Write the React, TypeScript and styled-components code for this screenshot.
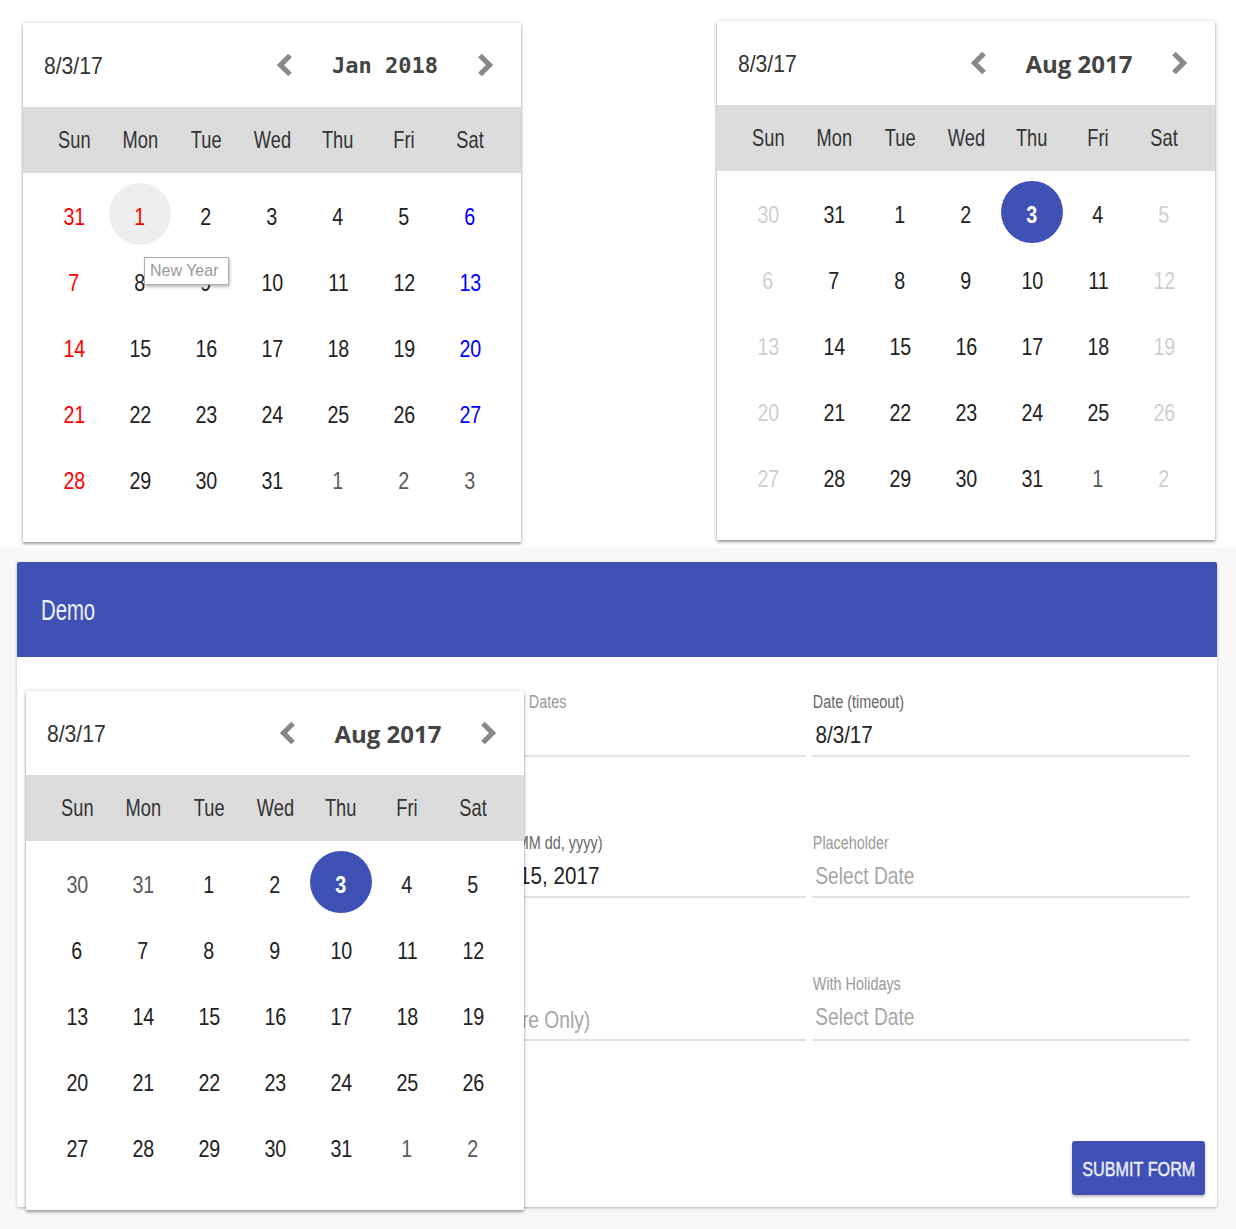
import React from 'react';
import styled, { createGlobalStyle } from 'styled-components';

const SANS = `"Liberation Sans", Arial, sans-serif`;

const GlobalStyle = createGlobalStyle`
  html, body { margin: 0; padding: 0; background: #ffffff; }
  body { font-family: ${SANS}; }
  * { box-sizing: border-box; }
`;

type Tone = 'normal' | 'muted' | 'faded' | 'sun' | 'sat' | 'selected' | 'holiday';

interface DayCell {
  day: number;
  tone: Tone;
}

const toneColor: Record<Tone, string> = {
  normal: '#222222',
  muted: '#5a5a5a',
  faded: '#cfcfcf',
  sun: '#ff0000',
  sat: '#0000ff',
  selected: '#ffffff',
  holiday: '#ff0000',
};

const Page = styled.div`
  width: 1236px;
  height: 1229px;
  display: flex;
  flex-direction: column;
  overflow: hidden;
`;

const TopRow = styled.section`
  height: 548px;
  background: #ffffff;
  display: flex;
  justify-content: space-between;
  align-items: flex-start;
  padding: 21px 21px 0 23px;
`;

const BottomArea = styled.section`
  flex: 1;
  background: #f8f8f8;
  padding: 14px 19px 0 17px;
`;

const CalendarCard = styled.div<{ $shiftTop?: number }>`
  position: relative;
  width: 498px;
  height: 519px;
  margin-top: ${(p) => p.$shiftTop ?? 0}px;
  background: #ffffff;
  box-shadow: 0 2px 3px rgba(0, 0, 0, 0.35), 0 0 4px rgba(0, 0, 0, 0.12);
  display: flex;
  flex-direction: column;
`;

const PopupLayer = styled.div`
  position: absolute;
  left: 9px;
  top: 129px;
  z-index: 5;
`;

const CalHeader = styled.div`
  height: 84px;
  display: flex;
  align-items: center;
  justify-content: space-between;
  padding: 0 21px;
`;

const SelectedDate = styled.span`
  display: inline-block;
  margin-top: 2px;
  font-family: ${SANS};
  font-size: 24px;
  color: #333333;
  transform: scaleX(0.88);
  transform-origin: left center;
  white-space: nowrap;
`;

const MonthNav = styled.div`
  display: flex;
  align-items: center;
`;

const NavButton = styled.button`
  width: 30px;
  height: 30px;
  border: 0;
  padding: 0;
  background: none;
  display: flex;
  align-items: center;
  justify-content: center;
  cursor: pointer;
`;

const MonthTitle = styled.span<{ $mono?: boolean }>`
  width: 170px;
  text-align: center;
  color: #444444;
  font-weight: 700;
  font-size: ${(p) => (p.$mono ? '22px' : '24px')};
  font-family: ${(p) => (p.$mono ? '"DejaVu Sans Mono", monospace' : '"Open Sans", sans-serif')};
`;

const WeekBar = styled.div`
  height: 66px;
  background: #dcdcdc;
  display: grid;
  grid-template-columns: repeat(7, 66px);
  padding: 0 18px;
  align-items: center;
  justify-items: center;
`;

const WeekdayName = styled.span`
  display: inline-block;
  font-family: ${SANS};
  font-size: 24px;
  color: #333333;
  transform: scaleX(0.76);
  white-space: nowrap;
`;

const DayGrid = styled.div`
  display: grid;
  grid-template-columns: repeat(7, 66px);
  grid-auto-rows: 66px;
  padding: 10px 18px 0;
`;

const DayCellBox = styled.div`
  display: flex;
  align-items: flex-start;
  justify-content: center;
`;

const DayMark = styled.span<{ $tone: Tone }>`
  width: 62px;
  height: 62px;
  border-radius: 50%;
  display: flex;
  align-items: center;
  justify-content: center;
  padding-top: 5px;
  background: ${(p) =>
    p.$tone === 'selected' ? '#3f51b5' : p.$tone === 'holiday' ? '#eeeeee' : 'transparent'};
`;

const DayNumber = styled.span<{ $tone: Tone }>`
  display: inline-block;
  font-family: ${SANS};
  font-size: 24px;
  color: ${(p) => toneColor[p.$tone]};
  font-weight: ${(p) => (p.$tone === 'selected' ? 700 : 400)};
  transform: scaleX(0.82);
`;

const Tooltip = styled.div`
  position: absolute;
  left: 121px;
  top: 234px;
  width: 85px;
  height: 28px;
  background: #ffffff;
  border: 1px solid #b0b0b0;
  box-shadow: 1px 2px 3px rgba(0, 0, 0, 0.25);
  font-family: ${SANS};
  font-size: 16px;
  color: #9a9a9a;
  padding: 4px 0 0 5px;
  white-space: nowrap;
`;

const Chevron = ({ dir }: { dir: 'left' | 'right' }) => (
  <svg width="18" height="24" viewBox="0 0 18 24" aria-hidden>
    <polyline
      points={dir === 'left' ? '14,2.5 4.5,12 14,21.5' : '4,2.5 13.5,12 4,21.5'}
      fill="none"
      stroke="#888888"
      strokeWidth="5.2"
      strokeLinejoin="miter"
    />
  </svg>
);

const WEEKDAYS = ['Sun', 'Mon', 'Tue', 'Wed', 'Thu', 'Fri', 'Sat'];

function buildMonth(
  startDay: number,
  prevMonthLen: number,
  monthLen: number,
  toneFor: (day: number, col: number, inMonth: boolean) => Tone,
): DayCell[] {
  const cells: DayCell[] = [];
  const lead = prevMonthLen - startDay + 1;
  for (let i = 0; i < 35; i++) {
    const col = i % 7;
    let day: number;
    let inMonth = true;
    const idx = i - lead;
    if (idx < 0) {
      day = startDay + i;
      inMonth = false;
    } else if (idx >= monthLen) {
      day = idx - monthLen + 1;
      inMonth = false;
    } else {
      day = idx + 1;
    }
    cells.push({ day, tone: toneFor(day, col, inMonth) });
  }
  return cells;
}

const janCells = buildMonth(31, 31, 31, (day, col, inMonth) => {
  if (inMonth && day === 1) return 'holiday';
  if (col === 0) return 'sun';
  if (!inMonth) return 'muted';
  if (col === 6) return 'sat';
  return 'normal';
});

const augWeekendCells = buildMonth(30, 31, 31, (day, col, inMonth) => {
  if (col === 0 || col === 6) return 'faded';
  if (inMonth && day === 3) return 'selected';
  if (!inMonth && day === 1) return 'muted';
  return 'normal';
});

const augCells = buildMonth(30, 31, 31, (day, _col, inMonth) => {
  if (inMonth && day === 3) return 'selected';
  if (!inMonth) return 'muted';
  return 'normal';
});

interface CalendarProps {
  title: string;
  mono?: boolean;
  cells: DayCell[];
  shiftTop?: number;
  tooltip?: string;
}

const Calendar = ({ title, mono, cells, shiftTop, tooltip }: CalendarProps) => (
  <CalendarCard $shiftTop={shiftTop}>
    <CalHeader>
      <SelectedDate>8/3/17</SelectedDate>
      <MonthNav>
        <NavButton aria-label="Previous month">
          <Chevron dir="left" />
        </NavButton>
        <MonthTitle $mono={mono}>{title}</MonthTitle>
        <NavButton aria-label="Next month">
          <Chevron dir="right" />
        </NavButton>
      </MonthNav>
    </CalHeader>
    <WeekBar>
      {WEEKDAYS.map((w) => (
        <WeekdayName key={w}>{w}</WeekdayName>
      ))}
    </WeekBar>
    <DayGrid>
      {cells.map((c, i) => (
        <DayCellBox key={i}>
          <DayMark $tone={c.tone}>
            <DayNumber $tone={c.tone}>{c.day}</DayNumber>
          </DayMark>
        </DayCellBox>
      ))}
    </DayGrid>
    {tooltip && <Tooltip>{tooltip}</Tooltip>}
  </CalendarCard>
);

const DemoCard = styled.div`
  position: relative;
  width: 1200px;
  height: 645px;
  background: #ffffff;
  border-radius: 2px;
  box-shadow: 0 1px 3px rgba(0, 0, 0, 0.28);
  display: flex;
  flex-direction: column;
`;

const DemoHeader = styled.header`
  height: 95px;
  flex-shrink: 0;
  background: #3f51b5;
  border-radius: 2px 2px 0 0;
  display: flex;
  align-items: center;
  padding: 2px 0 0 24px;
`;

const DemoTitle = styled.h1`
  margin: 0;
  font-family: ${SANS};
  font-weight: 400;
  font-size: 29px;
  color: #eef0fb;
  transform: scaleX(0.7);
  transform-origin: left center;
`;

const DemoBody = styled.div`
  flex: 1;
  display: flex;
  flex-direction: column;
  padding: 35px 12px 12px;
`;

const FieldGrid = styled.div`
  display: grid;
  grid-template-columns: repeat(3, 378px);
  column-gap: 6px;
  row-gap: 76px;
  margin: 0 15px;
`;

const Field = styled.div`
  display: flex;
  flex-direction: column;
  border-bottom: 2px solid #e3e3e3;
`;

const FieldLabel = styled.span<{ $strong?: boolean }>`
  display: block;
  height: 20px;
  line-height: 20px;
  padding-left: 1px;
  font-family: ${SANS};
  font-size: 18px;
  color: ${(p) => (p.$strong ? '#666666' : '#9a9a9a')};
  white-space: nowrap;
  transform: scaleX(0.8);
  transform-origin: left center;
`;

const FieldValue = styled.span<{ $placeholder?: boolean; $floating?: boolean }>`
  display: block;
  height: 30px;
  line-height: 30px;
  margin-top: ${(p) => (p.$floating === false ? '31px' : '8px')};
  margin-bottom: ${(p) => (p.$floating === false ? '4px' : '5px')};
  padding-left: 4px;
  font-family: ${SANS};
  font-size: 24px;
  color: ${(p) => (p.$placeholder ? '#a6a6a6' : '#222222')};
  white-space: nowrap;
  transform: scaleX(${(p) => (p.$placeholder ? 0.8 : 0.86)});
  transform-origin: left center;
`;

const ButtonRow = styled.div`
  margin-top: auto;
  display: flex;
  justify-content: flex-end;
`;

const SubmitButton = styled.button`
  width: 133px;
  height: 54px;
  border: 0;
  border-radius: 3px;
  background: #3f51b5;
  box-shadow: 0 2px 3px rgba(0, 0, 0, 0.25);
  display: flex;
  align-items: center;
  justify-content: center;
  padding: 2px 0 0;
  cursor: pointer;
`;

const ButtonText = styled.span`
  display: inline-block;
  font-family: ${SANS};
  font-size: 20px;
  font-weight: 400;
  color: #eceefa;
  -webkit-text-stroke: 0.45px #eceefa;
  text-transform: uppercase;
  white-space: nowrap;
  transform: scaleX(0.81);
`;

interface FieldSpec {
  label?: string;
  value: string;
  placeholder?: boolean;
  strong?: boolean;
}

const fields: FieldSpec[] = [
  { label: '', value: '' },
  { label: 'Show Disabled Dates', value: '', placeholder: true },
  { label: 'Date (timeout)', value: '8/3/17', strong: true },
  { label: '', value: '' },
  { label: 'Date (EEE, MMM dd, yyyy)', value: 'Tue, Aug 15, 2017', strong: true },
  { label: 'Placeholder', value: 'Select Date', placeholder: true },
  { label: '', value: '' },
  { value: 'Date (Future Only)', placeholder: true },
  { label: 'With Holidays', value: 'Select Date', placeholder: true },
];

export default function App() {
  return (
    <Page>
      <GlobalStyle />
      <TopRow>
        <Calendar title="Jan 2018" mono cells={janCells} shiftTop={2} tooltip="New Year" />
        <Calendar title="Aug 2017" cells={augWeekendCells} />
      </TopRow>
      <BottomArea>
        <DemoCard>
          <DemoHeader>
            <DemoTitle>Demo</DemoTitle>
          </DemoHeader>
          <DemoBody>
            <FieldGrid>
              {fields.map((f, i) => (
                <Field key={i}>
                  {f.label !== undefined && <FieldLabel $strong={f.strong}>{f.label}</FieldLabel>}
                  <FieldValue
                    $placeholder={f.placeholder}
                    $floating={f.label !== undefined ? undefined : false}
                  >
                    {f.value}
                  </FieldValue>
                </Field>
              ))}
            </FieldGrid>
            <ButtonRow>
              <SubmitButton>
                <ButtonText>Submit Form</ButtonText>
              </SubmitButton>
            </ButtonRow>
          </DemoBody>
          <PopupLayer>
            <Calendar title="Aug 2017" cells={augCells} />
          </PopupLayer>
        </DemoCard>
      </BottomArea>
    </Page>
  );
}
